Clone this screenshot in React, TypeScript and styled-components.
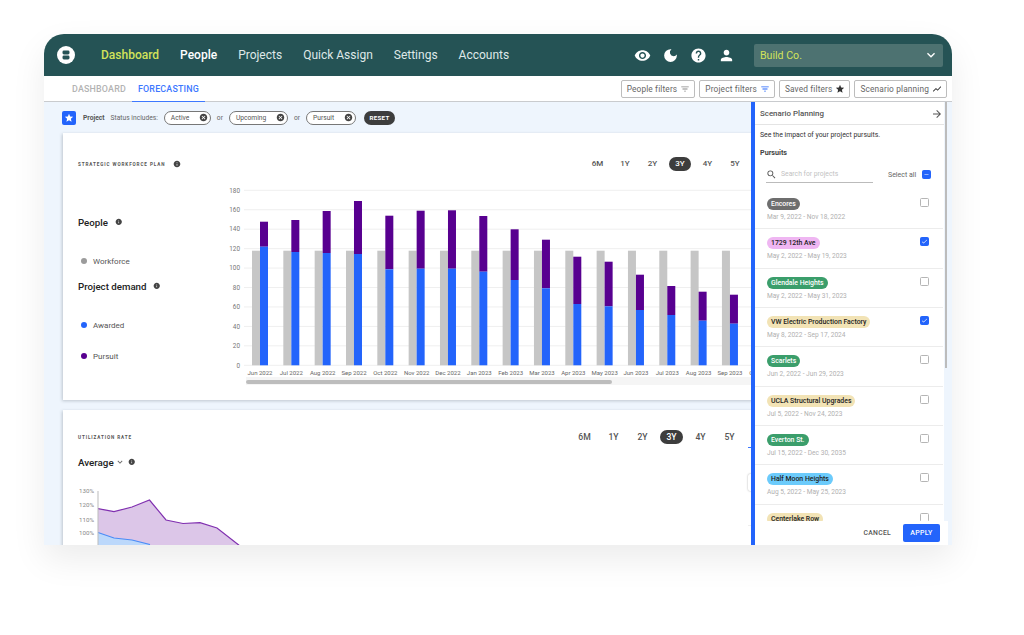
import * as React from 'react';
import styled, { createGlobalStyle } from 'styled-components';
import {
  MdArrowForward,
  MdCancel,
  MdCheck,
  MdDarkMode,
  MdFilterList,
  MdHelp,
  MdInfo,
  MdKeyboardArrowDown,
  MdPerson,
  MdRemove,
  MdSearch,
  MdShowChart,
  MdStar,
  MdVisibility,
} from 'react-icons/md';

const BLUE = '#2364fb';
const PURPLE = '#580090';

const GlobalStyle = createGlobalStyle`
  html, body {
    margin: 0;
    padding: 0;
    background: #fff;
    font-family: Roboto, "Liberation Sans", sans-serif;
  }
  * { box-sizing: border-box; }
`;

const Page = styled.div`
  width: 1024px;
  height: 635px;
  padding: 34px 72px 0 44px;
  overflow: hidden;
`;

const Window = styled.div`
  width: 908px;
  height: 511px;
  border-radius: 20px 20px 0 0;
  overflow: hidden;
  display: flex;
  flex-direction: column;
  background: #fff;
  box-shadow: 0 14px 34px rgba(0, 0, 0, 0.08);
`;

const Header = styled.header`
  height: 42px;
  flex: none;
  display: flex;
  align-items: center;
  padding: 0 9px 0 13px;
  background: #255355;
`;

const Nav = styled.nav`
  display: flex;
  gap: 21px;
  margin-left: 26px;
`;

const NavItem = styled.a<{ $active?: boolean; $current?: boolean }>`
  font-size: 12px;
  line-height: 16px;
  font-weight: ${(p) => (p.$current || p.$active ? 500 : 400)};
  color: ${(p) => (p.$active ? '#d3e25a' : p.$current ? '#fff' : '#dfe8e8')};
`;

const HeaderIcons = styled.div`
  display: flex;
  align-items: center;
  gap: 11px;
  margin-left: auto;
  margin-right: 19px;
  color: #fff;
  font-size: 17px;
  svg { display: block; }
`;

const CompanySelect = styled.div`
  width: 189px;
  height: 23px;
  display: flex;
  align-items: center;
  justify-content: space-between;
  padding: 0 4px 0 6px;
  border-radius: 2px;
  background: #4d7271;
  color: #d3e25a;
  font-size: 10.6px;
  svg { color: #fff; font-size: 16px; }
`;

const SubBar = styled.div`
  height: 26px;
  flex: none;
  display: flex;
  align-items: stretch;
  justify-content: space-between;
  padding: 0 5px 0 22px;
  border-bottom: 1px solid #c9cbce;
`;

const Tabs = styled.div`
  display: flex;
`;

const Tab = styled.div<{ $active?: boolean }>`
  display: flex;
  align-items: center;
  padding: 0 6px;
  margin-bottom: -1px;
  font-size: 8.9px;
  font-weight: 500;
  letter-spacing: 0.2px;
  color: ${(p) => (p.$active ? '#3d78ff' : '#b3b3b3')};
  border-bottom: 1px solid ${(p) => (p.$active ? '#3d78ff' : 'transparent')};
`;

const FilterButtons = styled.div`
  display: flex;
  align-items: center;
  gap: 4px;
`;

const FilterButton = styled.button`
  height: 18px;
  display: flex;
  align-items: center;
  gap: 3px;
  padding: 0 4px 0 5px;
  border: 1px solid #bdbdbd;
  border-radius: 2px;
  background: #fff;
  color: #666;
  font-family: inherit;
  font-size: 8.3px;
  letter-spacing: 0.15px;
  white-space: nowrap;
`;

const Body = styled.div`
  position: relative;
  flex: 1;
  min-height: 0;
  overflow: hidden;
  background: #eef5fd;
`;

const FilterRow = styled.div`
  height: 31px;
  display: flex;
  align-items: center;
  padding-left: 18px;
  font-size: 6.7px;
  color: #666;
`;

const StarBadge = styled.div`
  width: 14px;
  height: 14px;
  display: flex;
  align-items: center;
  justify-content: center;
  border-radius: 2px;
  background: ${BLUE};
  color: #fff;
  font-size: 10px;
  margin-right: 7px;
`;

const RowLabel = styled.span`
  font-weight: 700;
  color: #555;
  margin-right: 6px;
`;

const StatusChip = styled.div<{ $width: number }>`
  width: ${(p) => p.$width}px;
  height: 14px;
  display: flex;
  align-items: center;
  justify-content: space-between;
  margin-left: 6px;
  padding: 0 2px 0 6px;
  border: 1px solid #777;
  border-radius: 7px;
  background: #fff;
  color: #555;
  svg { color: #444; font-size: 9px; }
`;

const OrText = styled.span`
  margin-left: 6px;
`;

const ResetPill = styled.div`
  width: 31px;
  height: 14px;
  margin-left: 8px;
  border-radius: 7px;
  background: #3d3d3d;
  color: #fff;
  font-size: 6.2px;
  font-weight: 700;
  letter-spacing: 0.3px;
  line-height: 14px;
  text-align: center;
`;

const Card = styled.section<{ $height: number; $top: number }>`
  position: relative;
  width: 695px;
  height: ${(p) => p.$height}px;
  margin: 0 0 10px 19px;
  padding: ${(p) => p.$top}px 0 0 15px;
  background: #fff;
  box-shadow: -1px 1px 3px rgba(70, 80, 90, 0.28);
`;

const CardHead = styled.div`
  height: 14px;
  display: flex;
  align-items: center;
  justify-content: space-between;
`;

const CardTitle = styled.div`
  display: flex;
  align-items: center;
  gap: 8px;
  font-size: 4.6px;
  font-weight: 700;
  letter-spacing: 0.9px;
  color: #555;
  svg { font-size: 8px; color: #444; }
`;

const RangeTabs = styled.div<{ $gap: number; $end: number }>`
  display: flex;
  gap: ${(p) => p.$gap}px;
  margin-right: ${(p) => p.$end}px;
`;

const RangeTab = styled.div<{ $active?: boolean; $width: number; $size: number }>`
  width: ${(p) => p.$width}px;
  height: 14px;
  border-radius: 7px;
  background: ${(p) => (p.$active ? '#3d3d3d' : 'transparent')};
  color: ${(p) => (p.$active ? '#fff' : '#555')};
  font-size: ${(p) => p.$size}px;
  font-weight: 500;
  line-height: 14px;
  text-align: center;
`;

const ChartGrid = styled.div`
  display: grid;
  grid-template-columns: 147px 533px;
`;

const Legend = styled.div`
  display: flex;
  flex-direction: column;
  padding-top: 44px;
`;

const LegendHeading = styled.div<{ $mt?: number }>`
  height: 14px;
  display: flex;
  align-items: center;
  gap: 7px;
  margin-top: ${(p) => p.$mt ?? 0}px;
  font-size: 9.7px;
  font-weight: 500;
  color: #222;
  svg { font-size: 7.5px; color: #444; }
`;

const LegendItem = styled.div<{ $mt: number; $dot: string }>`
  height: 10px;
  display: flex;
  align-items: center;
  gap: 6px;
  margin: ${(p) => p.$mt}px 0 0 3px;
  font-size: 8px;
  color: #555;
  &::before {
    content: '';
    width: 6px;
    height: 6px;
    border-radius: 50%;
    background: ${(p) => p.$dot};
  }
`;

const ScrollTrack = styled.div`
  position: absolute;
  left: 183px;
  top: 244px;
  width: 512px;
  height: 8px;
  padding-top: 3px;
  background: #f5f5f5;
`;

const ScrollThumb = styled.div`
  width: 366px;
  height: 4px;
  border-radius: 2px;
  background: #bdbdbd;
`;

const AverageRow = styled.div`
  height: 14px;
  display: flex;
  align-items: center;
  margin-top: 11px;
  font-size: 9.8px;
  font-weight: 500;
  color: #222;
  svg:first-of-type { font-size: 10px; color: #666; margin-left: 1px; }
  svg:last-of-type { font-size: 7.5px; color: #444; margin-left: 3px; }
`;

const AreaChart = styled.svg`
  display: block;
  margin-top: 16px;
`;

const HiddenMenu = styled.div`
  position: absolute;
  left: 685px;
  top: 17px;
  width: 10px;
`;

const HiddenMenuRow = styled.div<{ $h: number; $line: string }>`
  height: ${(p) => p.$h}px;
  border-bottom: 1px solid ${(p) => p.$line};
`;

const HiddenMenuBox = styled.div`
  position: absolute;
  left: 0;
  top: 47px;
  width: 10px;
  height: 17px;
  border-radius: 2px;
  background: #fff;
  box-shadow: 0 0 2px rgba(0, 0, 0, 0.35);
`;

const Panel = styled.aside`
  position: absolute;
  left: 707px;
  top: 0;
  bottom: 0;
  width: 199px;
  display: flex;
  flex-direction: column;
  border-left: 4px solid ${BLUE};
`;

const PanelHead = styled.div`
  height: 23px;
  flex: none;
  display: flex;
  align-items: center;
  justify-content: space-between;
  padding: 1px 1px 0 5px;
  margin-right: 6px;
  background: #fff;
  border-bottom: 1px solid #e4e4e4;
  font-size: 7.9px;
  font-weight: 500;
  color: #555;
  svg { font-size: 12px; color: #555; }
`;

const PanelScroll = styled.div`
  position: relative;
  flex: 1;
  min-height: 0;
  margin-right: 6px;
  background: #fff;
  overflow: hidden;
`;

const PanelEdge = styled.div`
  position: absolute;
  top: 0;
  left: 190px;
  width: 2px;
  height: 266px;
  background: #bcbcbc;
`;

const PanelIntro = styled.div`
  padding: 5px 0 0 5px;
  font-size: 6.9px;
  line-height: 10px;
  color: #333;
`;

const PursuitsLabel = styled.div`
  margin: 8px 0 0 5px;
  font-size: 7.2px;
  line-height: 10px;
  font-weight: 700;
  color: #444;
`;

const SearchRow = styled.div`
  height: 17px;
  display: flex;
  align-items: center;
  margin: 8px 0 7px 11px;
`;

const SearchBox = styled.div`
  width: 107px;
  height: 17px;
  display: flex;
  align-items: center;
  gap: 4px;
  border-bottom: 1px solid #bbb;
  color: #c2c2c2;
  font-size: 6.8px;
  svg { font-size: 11px; color: #555; }
`;

const SelectAll = styled.div`
  width: 28px;
  margin-left: 15px;
  margin-right: 6px;
  font-size: 7px;
  color: #666;
  white-space: nowrap;
`;

const CheckBox = styled.div<{ $on?: boolean }>`
  width: 9px;
  height: 9px;
  flex: none;
  display: flex;
  align-items: center;
  justify-content: center;
  border-radius: 1.5px;
  color: #fff;
  font-size: 9px;
  background: ${(p) => (p.$on ? BLUE : '#fff')};
  border: 1px solid ${(p) => (p.$on ? BLUE : '#b5b5b5')};
`;

const ProjectRow = styled.div`
  height: 39.35px;
  display: flex;
  align-items: flex-start;
  justify-content: space-between;
  padding: 8px 14px 0 12px;
  margin-right: 1px;
  border-bottom: 1px solid #ececec;
`;

const ProjectChip = styled.div<{ $bg: string; $fg: string }>`
  width: fit-content;
  height: 12px;
  padding: 0 4px;
  border-radius: 6px;
  background: ${(p) => p.$bg};
  color: ${(p) => p.$fg};
  font-size: 6.9px;
  font-weight: 500;
  line-height: 12px;
  white-space: nowrap;
`;

const ProjectDates = styled.div`
  margin-top: 2px;
  font-size: 6.6px;
  line-height: 10px;
  color: #b0b0b0;
`;

const PanelFooter = styled.div`
  height: 24px;
  flex: none;
  display: flex;
  align-items: center;
  justify-content: flex-end;
  gap: 12px;
  padding-right: 8px;
  margin-right: 2px;
  background: #fff;
`;

const CancelText = styled.span`
  font-size: 6.8px;
  font-weight: 500;
  letter-spacing: 0.3px;
  color: #555;
`;

const ApplyButton = styled.button`
  width: 37px;
  height: 18px;
  border: none;
  border-radius: 2px;
  background: ${BLUE};
  color: #fff;
  font-family: inherit;
  font-size: 7px;
  font-weight: 500;
  letter-spacing: 0.3px;
`;

const LogoMark = () => (
  <svg width="18" height="18" viewBox="0 0 18 18">
    <circle cx="9" cy="9" r="9" fill="#fff" />
    <rect x="5.5" y="4.5" width="7" height="4" rx="1.4" fill="#255355" />
    <rect x="5.5" y="9.5" width="7" height="4" rx="1.4" fill="#255355" />
  </svg>
);

const months = [
  'Jun 2022', 'Jul 2022', 'Aug 2022', 'Sep 2022', 'Oct 2022', 'Nov 2022', 'Dec 2022', 'Jan 2023',
  'Feb 2023', 'Mar 2023', 'Apr 2023', 'May 2023', 'Jun 2023', 'Jul 2023', 'Aug 2023', 'Sep 2023', 'Oct 2023',
];

// tops of the purple and blue bars, page y
const barTops = [
  [221.7, 246.7], [220, 252], [211, 253], [201, 254], [215.7, 269.3], [210.7, 268.7], [210.3, 268.7],
  [216, 271.7], [229.3, 280], [239.7, 288.3], [256.7, 304], [261.7, 306.3], [274.7, 310], [286, 315],
  [291.7, 320.7], [294.7, 323.7],
];

const ticks = [180, 160, 140, 120, 100, 80, 60, 40, 20, 0];

const WorkforceChart = () => (
  <svg width="533" height="217" viewBox="225 171 533 217" style={{ display: 'block' }}>
    {ticks.map((t) => {
      const y = 365.3 - (t / 180) * 175;
      return (
        <g key={t}>
          <line x1="244" x2="758" y1={y} y2={y} stroke="#efefef" strokeWidth="1" />
          <text x="240" y={y + 2.3} textAnchor="end" fontSize="6.4" fill="#777">{t}</text>
        </g>
      );
    })}
    {months.map((m, i) => {
      const x = 260 + i * 31.33;
      const tops = barTops[i];
      return (
        <g key={m}>
          {tops && (
            <>
              <rect x={x - 8} y="250.7" width="8" height="114.6" fill="#c6c6c6" />
              <rect x={x} y={tops[0]} width="8" height={tops[1] - tops[0]} fill={PURPLE} />
              <rect x={x} y={tops[1]} width="8" height={365.3 - tops[1]} fill={BLUE} />
            </>
          )}
          <text x={x} y="374.5" textAnchor="middle" fontSize="6" fill="#666">{m}</text>
        </g>
      );
    })}
  </svg>
);

const UtilizationChart = () => (
  <AreaChart width="680" height="62" viewBox="78 485 680 62">
    {[['130%', 493], ['120%', 507], ['110%', 521.5], ['100%', 535]].map(([label, y]) => (
      <text key={label} x="94" y={y} textAnchor="end" fontSize="6.2" fill="#888">{label}</text>
    ))}
    <path
      d="M98 508.7 L114 511.7 L132 507 L149.5 500 L166 520 L183 523.5 L200 522.7 L217 528 L240 546 L98 546 Z"
      fill="#dcc6e8"
    />
    <path
      d="M98 508.7 L114 511.7 L132 507 L149.5 500 L166 520 L183 523.5 L200 522.7 L217 528 L240 546"
      fill="none"
      stroke="#8030b0"
      strokeWidth="1.2"
    />
    <path d="M98 532.5 L114 538 L132 540 L150 544.5 L150 546 L98 546 Z" fill="#bcd8fb" />
    <path d="M98 532.5 L114 538 L132 540 L150 544.5" fill="none" stroke="#4a8cf7" strokeWidth="1.2" />
    <line x1="98" x2="98" y1="491" y2="546" stroke="#bbb" strokeWidth="1" />
  </AreaChart>
);

const projects = [
  { name: 'Encores', dates: 'Mar 9, 2022 - Nov 18, 2022', bg: '#6e6e6e', fg: '#fff', on: false },
  { name: '1729 12th Ave', dates: 'May 2, 2022 - May 19, 2023', bg: '#efb6f2', fg: '#222', on: true },
  { name: 'Glendale Heights', dates: 'May 2, 2022 - May 31, 2023', bg: '#3b9e6b', fg: '#fff', on: false },
  { name: 'VW Electric Production Factory', dates: 'May 8, 2022 - Sep 17, 2024', bg: '#f2e3b5', fg: '#222', on: true },
  { name: 'Scarlets', dates: 'Jun 2, 2022 - Jun 29, 2023', bg: '#3b9e6b', fg: '#fff', on: false },
  { name: 'UCLA Structural Upgrades', dates: 'Jul 5, 2022 - Nov 24, 2023', bg: '#f2e3b5', fg: '#222', on: false },
  { name: 'Everton St.', dates: 'Jul 15, 2022 - Dec 30, 2035', bg: '#3b9e6b', fg: '#fff', on: false },
  { name: 'Half Moon Heights', dates: 'Aug 5, 2022 - May 25, 2023', bg: '#6ccbfb', fg: '#222', on: false },
  { name: 'Centerlake Row', dates: '', bg: '#f2e3b5', fg: '#222', on: false },
];

const ranges = ['6M', '1Y', '2Y', '3Y', '4Y', '5Y'];

export default function App() {
  return (
    <Page>
      <GlobalStyle />
      <Window>
        <Header>
          <LogoMark />
          <Nav>
            <NavItem $active>Dashboard</NavItem>
            <NavItem $current>People</NavItem>
            <NavItem>Projects</NavItem>
            <NavItem>Quick Assign</NavItem>
            <NavItem>Settings</NavItem>
            <NavItem>Accounts</NavItem>
          </Nav>
          <HeaderIcons>
            <MdVisibility />
            <MdDarkMode />
            <MdHelp />
            <MdPerson />
          </HeaderIcons>
          <CompanySelect>
            Build Co.
            <MdKeyboardArrowDown />
          </CompanySelect>
        </Header>

        <SubBar>
          <Tabs>
            <Tab>DASHBOARD</Tab>
            <Tab $active>FORECASTING</Tab>
          </Tabs>
          <FilterButtons>
            <FilterButton>People filters <MdFilterList size={10} color="#888" /></FilterButton>
            <FilterButton>Project filters <MdFilterList size={10} color={BLUE} /></FilterButton>
            <FilterButton>Saved filters <MdStar size={10} color="#333" /></FilterButton>
            <FilterButton>Scenario planning <MdShowChart size={10} color="#333" /></FilterButton>
          </FilterButtons>
        </SubBar>

        <Body>
          <FilterRow>
            <StarBadge><MdStar /></StarBadge>
            <RowLabel>Project</RowLabel>
            Status includes:
            <StatusChip $width={47}>Active <MdCancel /></StatusChip>
            <OrText>or</OrText>
            <StatusChip $width={59}>Upcoming <MdCancel /></StatusChip>
            <OrText>or</OrText>
            <StatusChip $width={50}>Pursuit <MdCancel /></StatusChip>
            <ResetPill>RESET</ResetPill>
          </FilterRow>

          <Card $height={267} $top={24}>
            <CardHead>
              <CardTitle>STRATEGIC WORKFORCE PLAN <MdInfo /></CardTitle>
              <RangeTabs $gap={5.5} $end={12}>
                {ranges.map((r) => (
                  <RangeTab key={r} $width={22} $size={8} $active={r === '3Y'}>{r}</RangeTab>
                ))}
              </RangeTabs>
            </CardHead>
            <ChartGrid>
              <Legend>
                <LegendHeading>People <MdInfo /></LegendHeading>
                <LegendItem $mt={27} $dot="#9b9b9b">Workforce</LegendItem>
                <LegendHeading $mt={13}>Project demand <MdInfo /></LegendHeading>
                <LegendItem $mt={27} $dot={BLUE}>Awarded</LegendItem>
                <LegendItem $mt={21} $dot={PURPLE}>Pursuit</LegendItem>
              </Legend>
              <WorkforceChart />
            </ChartGrid>
            <ScrollTrack><ScrollThumb /></ScrollTrack>
          </Card>

          <Card $height={200} $top={20}>
            <CardHead>
              <CardTitle>UTILIZATION RATE</CardTitle>
              <RangeTabs $gap={6} $end={17}>
                {ranges.map((r) => (
                  <RangeTab key={r} $width={23} $size={8.6} $active={r === '3Y'}>{r}</RangeTab>
                ))}
              </RangeTabs>
            </CardHead>
            <AverageRow>
              Average
              <MdKeyboardArrowDown />
              <MdInfo />
            </AverageRow>
            <UtilizationChart />
            <HiddenMenu>
              <HiddenMenuRow $h={21} $line="#3d78ff" />
              <HiddenMenuRow $h={39} $line="#eee" />
              <HiddenMenuRow $h={39} $line="#eee" />
              <HiddenMenuRow $h={22} $line="#eee" />
              <HiddenMenuBox />
            </HiddenMenu>
          </Card>

          <Panel>
            <PanelHead>
              Scenario Planning
              <MdArrowForward />
            </PanelHead>
            <PanelScroll>
              <PanelIntro>See the impact of your project pursuits.</PanelIntro>
              <PursuitsLabel>Pursuits</PursuitsLabel>
              <SearchRow>
                <SearchBox><MdSearch /> Search for projects</SearchBox>
                <SelectAll>Select all</SelectAll>
                <CheckBox $on><MdRemove /></CheckBox>
              </SearchRow>
              {projects.map((p) => (
                <ProjectRow key={p.name}>
                  <div>
                    <ProjectChip $bg={p.bg} $fg={p.fg}>{p.name}</ProjectChip>
                    {p.dates && <ProjectDates>{p.dates}</ProjectDates>}
                  </div>
                  <CheckBox $on={p.on}>{p.on && <MdCheck />}</CheckBox>
                </ProjectRow>
              ))}
            </PanelScroll>
            <PanelFooter>
              <CancelText>CANCEL</CancelText>
              <ApplyButton>APPLY</ApplyButton>
            </PanelFooter>
            <PanelEdge />
          </Panel>
        </Body>
      </Window>
    </Page>
  );
}
